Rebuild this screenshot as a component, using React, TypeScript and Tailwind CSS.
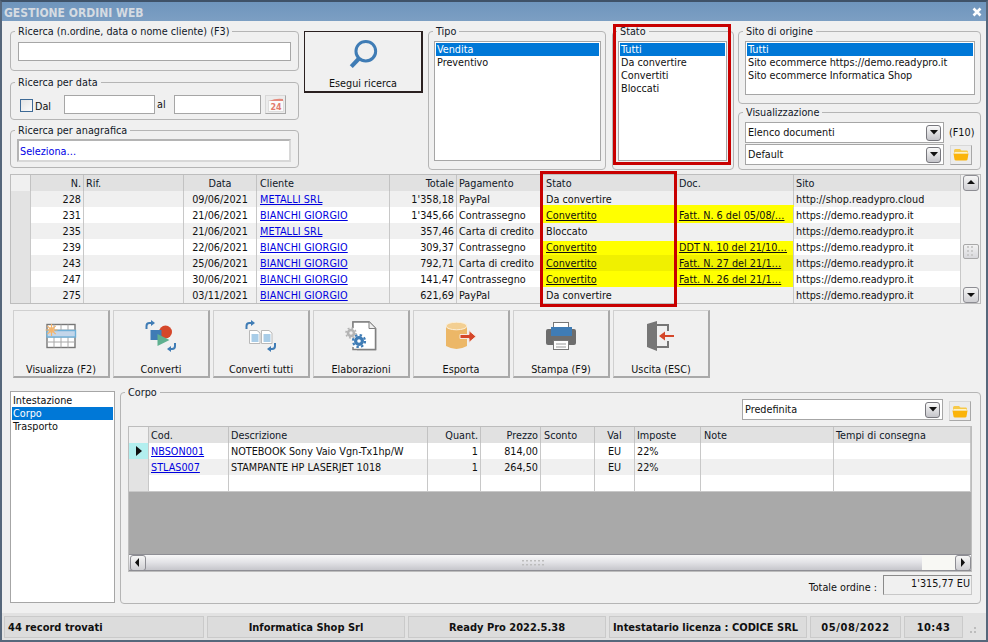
import React from "react";

const groupCls = "border border-[#b5b5b5] rounded-[4px] min-w-0";
const legendCls = "ml-[4px] px-[3px] pt-[1px] leading-[13px] text-[#101828]";

function Group({ label, className, children }: { label: string; className: string; children?: React.ReactNode }) {
  return (
    <fieldset className={`${groupCls} ${className}`}>
      <legend className={legendCls}>{label}</legend>
      {children}
    </fieldset>
  );
}

function ListBox({ items, className }: { items: string[]; className: string }) {
  return (
    <div className={`border border-[#a6a6a6] bg-white p-[1px] ${className}`}>
      {items.map((t, i) => (
        <div key={t} className={`h-[13px] leading-[13px] pl-[1px] whitespace-nowrap ${i === 0 ? "bg-[#0078d7] text-white" : "text-[#101010]"}`}>
          {t}
        </div>
      ))}
    </div>
  );
}

function Arrow({ dir }: { dir: "up" | "down" | "left" | "right" }) {
  const pts = { up: "1,6 9,6 5,2", down: "1,2 9,2 5,6", left: "6,0 6,9 2,4.5", right: "3,0 3,9 7,4.5" }[dir];
  return (
    <svg width="10" height="9" viewBox="0 0 10 9">
      <polygon points={pts} fill="#111" />
    </svg>
  );
}

function ScrollBtn({ dir, className }: { dir: "up" | "down" | "left" | "right"; className: string }) {
  return (
    <div className={`flex items-center justify-center border border-[#8d8d93] rounded-[3px] bg-gradient-to-b from-[#f6f6f6] to-[#cfcfd3] ${className}`}>
      <Arrow dir={dir} />
    </div>
  );
}

function Combo({ text, className }: { text: string; className: string }) {
  return (
    <div className={`flex items-center border border-[#a6a6a6] bg-white pl-[2px] pr-[2px] ${className}`}>
      <span className="flex-1 truncate">{text}</span>
      <div className="w-[15px] h-[16px] flex items-center justify-center border border-[#77777d] rounded-[3px] bg-gradient-to-b from-[#fafafa] to-[#c4c4c9]">
        <svg width="8" height="5" viewBox="0 0 8 5"><polygon points="0,0 8,0 4,4.5" fill="#111" /></svg>
      </div>
    </div>
  );
}

function Folder() {
  return (
    <svg width="16" height="13" viewBox="0 0 16 13">
      <path d="M1 2.5Q1 1 2.5 1H7L8.5 2.5H14Q15 2.5 15 4V5H1Z" fill="#f7c948" />
      <path d="M0.5 5.5H15.5L14.5 11.5Q14.3 12.5 13 12.5H3Q1.7 12.5 1.5 11.5Z" fill="#fbb40a" />
      <rect x="1.5" y="4" width="13" height="1.4" fill="#fff3c4" />
    </svg>
  );
}

function FolderBtn({ className }: { className: string }) {
  return (
    <div className={`w-[22px] h-[20px] flex items-center justify-center bg-[#ececec] border border-[#d8d8d8] border-r-[#a8a8a8] border-b-[#a8a8a8] ${className}`}>
      <Folder />
    </div>
  );
}

const Link = ({ children }: { children: React.ReactNode }) => <span className="text-[#0000e0] underline">{children}</span>;
const YL = ({ children }: { children: React.ReactNode }) => <span className="text-[#101010] underline">{children}</span>;

type Row = { n: string; d: string; c: string; t: string; p: string; s: string; doc: string; site: string; yl?: string };
const rows: Row[] = [
  { n: "228", d: "09/06/2021", c: "METALLI SRL", t: "1'358,18", p: "PayPal", s: "Da convertire", doc: "", site: "http://shop.readypro.cloud" },
  { n: "231", d: "21/06/2021", c: "BIANCHI GIORGIO", t: "1'345,66", p: "Contrassegno", s: "Convertito", doc: "Fatt. N. 6 del 05/08/…", site: "https://demo.readypro.it", yl: "bg-[#ffff00] shadow-[0_-2px_0_#ffff00]" },
  { n: "235", d: "21/06/2021", c: "METALLI SRL", t: "357,46", p: "Carta di credito", s: "Bloccato", doc: "", site: "https://demo.readypro.it" },
  { n: "239", d: "22/06/2021", c: "BIANCHI GIORGIO", t: "309,37", p: "Contrassegno", s: "Convertito", doc: "DDT N. 10 del 21/10…", site: "https://demo.readypro.it", yl: "bg-[#ffff00] shadow-[inset_0_2px_0_#f0f0f0]" },
  { n: "243", d: "25/06/2021", c: "BIANCHI GIORGIO", t: "792,71", p: "Carta di credito", s: "Convertito", doc: "Fatt. N. 27 del 21/1…", site: "https://demo.readypro.it", yl: "bg-[#f0f000]" },
  { n: "247", d: "30/06/2021", c: "BIANCHI GIORGIO", t: "141,47", p: "Contrassegno", s: "Convertito", doc: "Fatt. N. 26 del 21/1…", site: "https://demo.readypro.it", yl: "bg-[#ffff00]" },
  { n: "275", d: "03/11/2021", c: "BIANCHI GIORGIO", t: "621,69", p: "PayPal", s: "Da convertire", doc: "", site: "https://demo.readypro.it" },
];

const topCols = "grid grid-cols-[20px_53px_100px_73px_133px_67px_86px_134px_117px_167px]";
const hCell = "h-[16px] leading-[18px] px-[2px] bg-[#e1e1e1] border-r border-r-[#c2c2c2] truncate text-[#101828]";
const bCell = "h-[16px] leading-[18px] px-[2px] border-r border-r-[#c8c8c8] whitespace-nowrap overflow-hidden text-[#101010]";

const botCols = "grid grid-cols-[20px_80px_199px_53px_60px_54px_40px_66px_133px_137px]";

const Turn1 = () => (
  <>
    <path d="M1.5 9V6Q1.5 3 4.5 3H6" stroke="#3f7cb5" strokeWidth="2" fill="none" />
    <polygon points="6,0 10,3 6,6" fill="#3f7cb5" />
  </>
);
const Turn2 = () => (
  <>
    <path d="M30 23V26Q30 29 27 29H26" stroke="#3f7cb5" strokeWidth="2" fill="none" />
    <polygon points="26,26 22,29 26,32" fill="#3f7cb5" />
  </>
);
const Box = ({ children }: { children: React.ReactNode }) => (
  <svg width="32" height="32" viewBox="0 0 32 32">{children}</svg>
);

const IconTable = () => (
  <Box>
    <rect x="2" y="4.5" width="28" height="23" fill="#fff" stroke="#777" strokeWidth="1.4" />
    <path d="M2 10H30M2 17H30M2 22H30M9 4.5V27.5M16 4.5V27.5M23 4.5V27.5" stroke="#a8a8a8" fill="none" />
    <rect x="2" y="10.5" width="28.5" height="6.5" fill="#c3d6ea" stroke="#6fb0d8" strokeWidth="1.4" />
    <circle cx="6.5" cy="10" r="3" fill="#f6c488" />
    <path d="M6.5 4V16M0.5 10H12.5M2.3 5.8L10.7 14.2M10.7 5.8L2.3 14.2" stroke="#f3b36c" strokeWidth="1.2" />
  </Box>
);
const IconConv = () => (
  <Box>
    <Turn1 />
    <circle cx="20.5" cy="12" r="6.5" fill="#d5472a" />
    <rect x="5.5" y="10" width="11" height="10" fill="#3f7cb5" />
    <polygon points="12.5,14 12.5,26 24.5,20" fill="#5fb08f" />
    <Turn2 />
  </Box>
);
const IconConvAll = () => (
  <Box>
    <Turn1 />
    <path d="M4.5 10.5H12L15 13V23.5H4.5Z" fill="#fff" stroke="#b9b9b9" />
    <path d="M16.5 10.5H24L27 13V23.5H16.5Z" fill="#fff" stroke="#b9b9b9" />
    <rect x="6.5" y="14" width="7" height="8" fill="#a9cde8" />
    <rect x="18.5" y="14" width="7" height="8" fill="#a9cde8" />
    <Turn2 />
  </Box>
);
const IconElab = () => (
  <Box>
    <path d="M8 8V2H24L30.5 8.5V29.5H12" fill="#fff" stroke="#808080" strokeWidth="1.5" />
    <path d="M8 2H24V8.5H30.5V29.5H8Z" fill="#fff" />
    <path d="M8 8V2H24L30.5 8.5V29.5H8V27" fill="none" stroke="#808080" strokeWidth="1.5" />
    <path d="M24 2V8.5H30.5" fill="#f0f0f0" stroke="#808080" />
    <circle cx="6" cy="13" r="3" fill="none" stroke="#b4b4b4" strokeWidth="2.6" />
    <circle cx="6" cy="13" r="5" fill="none" stroke="#b4b4b4" strokeWidth="1.6" strokeDasharray="1.9 2" />
    <circle cx="14" cy="21" r="3.4" fill="none" stroke="#3f7cb5" strokeWidth="3.2" />
    <circle cx="14" cy="21" r="6" fill="none" stroke="#3f7cb5" strokeWidth="2.2" strokeDasharray="2.4 2.3" />
  </Box>
);
const IconExport = () => (
  <Box>
    <path d="M1 6V26Q11.5 32 22 26V6Z" fill="#ecb767" />
    <ellipse cx="11.5" cy="6" rx="10.5" ry="3.8" fill="#f3cf92" stroke="#fbf0dc" />
    <path d="M15 14.5H24V10.5L31 16.5L24 22.5V18.5H15Z" fill="#d5472a" stroke="#f5e8df" />
  </Box>
);
const IconPrint = () => (
  <Box>
    <rect x="8.5" y="2.5" width="15" height="8" fill="#fff" stroke="#777" />
    <path d="M3 9H29Q31 9 31 11V23Q31 25 29 25H3Q1 25 1 23V11Q1 9 3 9Z" fill="#6d6d6d" />
    <rect x="6" y="7" width="21" height="9" fill="#3f7cb5" />
    <rect x="8.5" y="20.5" width="15" height="9" fill="#fff" stroke="#777" />
    <path d="M11 24H21M11 27H21" stroke="#999" />
  </Box>
);
const IconExit = () => (
  <Box>
    <polygon points="2,4 12,1 12,31 2,27" fill="#767676" />
    <path d="M12 5H23V11M23 21V27H12" stroke="#767676" strokeWidth="2" fill="none" />
    <path d="M29 15H20V11.5L14 16L20 20.5V17H29Z" fill="#d5472a" />
  </Box>
);

const actions: [string, React.ReactNode][] = [
  ["Visualizza (F2)", <IconTable />],
  ["Converti", <IconConv />],
  ["Converti tutti", <IconConvAll />],
  ["Elaborazioni", <IconElab />],
  ["Esporta", <IconExport />],
  ["Stampa (F9)", <IconPrint />],
  ["Uscita (ESC)", <IconExit />],
];

function Grip({ vertical }: { vertical?: boolean }) {
  return (
    <svg width={vertical ? 10 : 24} height={vertical ? 12 : 6} viewBox={vertical ? "0 0 10 12" : "0 0 24 6"}>
      {vertical
        ? [0, 4, 8].flatMap((y) => [1, 5].map((x) => <rect key={`${x}-${y}`} x={x} y={y} width="2" height="2" fill="#c9c9c9" />))
        : [0, 4, 8, 12, 16, 20].flatMap((x) => [0, 4].map((y) => <rect key={`${x}-${y}`} x={x} y={y} width="2" height="1.5" fill="#bdbdbd" />))}
    </svg>
  );
}

const statusCls = "h-[22px] leading-[21px] bg-[#dcdcdc] border border-[#cacaca]";

export default function App() {
  return (
    <div className="relative w-[988px] h-[642px] overflow-hidden flex flex-col bg-[#f0f0f0] border-2 border-[#56677b] border-t-[#3f5268] text-[10.75px] leading-[13px] text-[#101010] [font-family:'DejaVu_Sans_Condensed','DejaVu_Sans',sans-serif]">
      {/* Title bar */}
      <div className="h-[19px] shrink-0 flex items-center justify-between pt-[3px] pl-[2px] pr-[3px] bg-gradient-to-b from-[#6f95bd] to-[#7c9fc3]">
        <span className="text-[12px] font-bold text-[#d5dbe2]">GESTIONE ORDINI WEB</span>
        <svg width="12" height="12" viewBox="0 0 12 12" className="-mt-[3px]"><path d="M2.5 2.5L9.5 9.5M9.5 2.5L2.5 9.5" stroke="#fff" strokeWidth="2.6" /></svg>
      </div>

      {/* Search area */}
      <div className="flex items-start mt-[3px] ml-[8px] h-[146px] shrink-0">
        <div className="w-[289px] flex flex-col">
          <Group label="Ricerca (n.ordine, data o nome cliente) (F3)" className="h-[47px]">
            <div className="ml-[7px] mt-[4px] w-[273px] h-[19px] bg-white border border-[#a6a6a6]" />
          </Group>
          <Group label="Ricerca per data" className="h-[45px] mt-[4px]">
            <div className="flex items-center mt-[6px] ml-[9px]">
              <div className="w-[13px] h-[13px] mt-[1px] border border-[#3e6a96] bg-gradient-to-br from-[#e4e4e4] to-[#fafafa]" />
              <span className="ml-[2px] w-[29px] pt-[4px]">Dal</span>
              <div className="w-[91px] h-[19px] bg-white border border-[#a6a6a6]" />
              <span className="ml-[2px] w-[17px]">al</span>
              <div className="w-[87px] h-[19px] bg-white border border-[#a6a6a6]" />
              <div className="ml-[4px] w-[21px] h-[19px] flex items-center justify-center bg-[#ececec] border border-[#d8d8d8] border-r-[#a8a8a8] border-b-[#a8a8a8]">
                <svg width="16" height="14" viewBox="0 0 16 14">
                  <rect x="0.5" y="2.5" width="15" height="11" fill="#fbfbfb" stroke="#dedede" />
                  <path d="M1 3Q8 0 15 1V3Z" fill="#e58a7c" />
                  <text x="8" y="12" textAnchor="middle" fontSize="8" fontWeight="bold" fill="#e27b6c" fontFamily="DejaVu Sans">24</text>
                </svg>
              </div>
            </div>
          </Group>
          <Group label="Ricerca per anagrafica" className="h-[45px] mt-[3px]">
            <div className="ml-[6px] mt-[2px] w-[274px] h-[23px] bg-white border-2 border-[#b4b4b4] border-r-[#d8d8d8] border-b-[#d8d8d8] pl-[1px] leading-[21px] text-[#0000e6]">Seleziona…</div>
          </Group>
        </div>

        <div className="ml-[5px] mt-[7px] w-[119px] h-[62px] flex flex-col items-center bg-[#f0f0f0] border border-[#2a2020] border-b-2 border-r-2">
          <svg width="30" height="31" viewBox="0 0 32 32" className="mt-[7px]">
            <circle cx="19" cy="12.5" r="10.5" fill="none" stroke="#3f7cb5" strokeWidth="3.2" />
            <path d="M11.5 20.5L3.5 29" stroke="#3f7cb5" strokeWidth="4.4" />
          </svg>
          <span className="mt-[7px]">Esegui ricerca</span>
        </div>

        <Group label="Tipo" className="ml-[5px] w-[178px] h-[146px]">
          <ListBox items={["Vendita", "Preventivo"]} className="ml-[5px] mt-[3px] w-[167px] h-[120px]" />
        </Group>
        <Group label="Stato" className="ml-[6px] w-[122px] h-[146px]">
          <ListBox items={["Tutti", "Da convertire", "Convertiti", "Bloccati"]} className="ml-[5px] mt-[3px] w-[109px] h-[120px]" />
        </Group>

        <div className="ml-[4px] w-[243px] flex flex-col">
          <Group label="Sito di origine" className="h-[80px]">
            <ListBox items={["Tutti", "Sito ecommerce https://demo.readypro.it", "Sito ecommerce Informatica Shop"]} className="ml-[6px] mt-[3px] w-[230px] h-[54px]" />
          </Group>
          <Group label="Visualizzazione" className="h-[65px] mt-[1px]">
            <div className="flex items-center ml-[6px] mt-[3px]">
              <Combo text="Elenco documenti" className="w-[199px] h-[21px]" />
              <span className="ml-[5px]">(F10)</span>
            </div>
            <div className="flex items-center ml-[6px] mt-[1px]">
              <Combo text="Default" className="w-[199px] h-[21px]" />
              <FolderBtn className="ml-[6px]" />
            </div>
          </Group>
        </div>
      </div>

      {/* Orders grid */}
      <div className="flex mt-[4px] ml-[8px] w-[971px] h-[130px] shrink-0 bg-[#f0f0f0] border border-[#bdbdbd]">
        <div className="w-[950px] flex flex-col">
          <div className={topCols}>
            <div className={`${hCell} bg-[#f0f0f0]`} />
            <div className={`${hCell} text-right`}>N.</div>
            <div className={hCell}>Rif.</div>
            <div className={`${hCell} text-center`}>Data</div>
            <div className={`${hCell} pl-[3px]`}>Cliente</div>
            <div className={`${hCell} text-right`}>Totale</div>
            <div className={hCell}>Pagamento</div>
            <div className={`${hCell} pl-[3px]`}>Stato</div>
            <div className={hCell}>Doc.</div>
            <div className={hCell}>Sito</div>
          </div>
          {rows.map((r, i) => {
            const bg = i % 2 === 0 ? "bg-[#f0f0f0]" : "bg-white";
            return (
              <div key={r.n} className={`${topCols} ${bg}`}>
                <div className={`${bCell} bg-[#e3e3e3]`} />
                <div className={`${bCell} text-right`}>{r.n}</div>
                <div className={bCell} />
                <div className={`${bCell} text-center`}>{r.d}</div>
                <div className={`${bCell} pl-[3px] tracking-[0.12px]`}><Link>{r.c}</Link></div>
                <div className={`${bCell} text-right`}>{r.t}</div>
                <div className={bCell}>{r.p}</div>
                <div className={`${bCell} pl-[3px] ${r.yl ?? ""}`}>{r.yl ? <YL>{r.s}</YL> : r.s}</div>
                <div className={`${bCell} ${r.yl ?? ""}`}>{r.doc && <YL>{r.doc}</YL>}</div>
                <div className={bCell}>{r.site}</div>
              </div>
            );
          })}
        </div>
        <div className="w-[20px] pl-[1px] flex flex-col items-center bg-[#f0f0f0]">
          <ScrollBtn dir="up" className="w-[16px] h-[16px]" />
          <div className="mt-[53px] w-[16px] h-[16px] flex items-center justify-center border border-[#a8a8a8] rounded-[2px] bg-gradient-to-b from-[#f2f2f2] to-[#d8d8dc]"><Grip vertical /></div>
          <ScrollBtn dir="down" className="mt-[28px] w-[16px] h-[16px]" />
        </div>
      </div>

      {/* Action buttons */}
      <div className="flex gap-[3px] mt-[6px] ml-[11px] h-[68px] shrink-0">
        {actions.map(([label, icon]) => (
          <div key={label} className="w-[97px] flex flex-col items-center bg-[#f0f0f0] border border-[#d0d0d0] border-r-2 border-b-2 border-r-[#a9a9a9] border-b-[#a9a9a9]">
            <div className="h-[41px] mt-[5px] flex items-center justify-center">{icon}</div>
            <span className="mt-[7px]">{label}</span>
          </div>
        ))}
      </div>

      {/* Detail area */}
      <div className="flex mt-[7px] ml-[8px] h-[219px] shrink-0">
        <div className="mt-[6px] w-[105px] h-[212px] border border-[#a6a6a6] bg-white p-[1px] pt-[2px]">
          <div className="h-[13px] leading-[13px] pl-[1px]">Intestazione</div>
          <div className="h-[13px] leading-[13px] pl-[1px] bg-[#0078d7] text-white">Corpo</div>
          <div className="h-[13px] leading-[13px] pl-[1px]">Trasporto</div>
        </div>
        <Group label="Corpo" className="ml-[5px] w-[861px] h-[219px]">
          <div className="flex items-start justify-end mr-[9px] h-[21px]">
            <Combo text="Predefinita" className="w-[201px] h-[21px]" />
            <FolderBtn className="ml-[6px] mt-[2px]" />
          </div>
          <div className="ml-[7px] mt-[6px] w-[844px] h-[146px] flex flex-col border border-[#bdbdbd] bg-[#a9a9a9]">
            <div className={botCols}>
              <div className={`${hCell} bg-[#f0f0f0]`} />
              <div className={hCell}>Cod.</div>
              <div className={hCell}>Descrizione</div>
              <div className={`${hCell} text-right`}>Quant.</div>
              <div className={`${hCell} text-right`}>Prezzo</div>
              <div className={`${hCell} pl-[3px]`}>Sconto</div>
              <div className={`${hCell} text-center`}>Val</div>
              <div className={hCell}>Imposte</div>
              <div className={`${hCell} pl-[3px]`}>Note</div>
              <div className={hCell}>Tempi di consegna</div>
            </div>
            <div className={`${botCols} bg-white`}>
              <div className={`${bCell} bg-[#b2efef] flex items-center justify-center`}>
                <svg width="6" height="10" viewBox="0 0 6 10"><polygon points="0,0 6,5 0,10" fill="#111" /></svg>
              </div>
              <div className={bCell}><Link>NBSON001</Link></div>
              <div className={bCell}>NOTEBOOK Sony Vaio Vgn-Tx1hp/W</div>
              <div className={`${bCell} text-right`}>1</div>
              <div className={`${bCell} text-right`}>814,00</div>
              <div className={bCell} />
              <div className={`${bCell} text-center`}>EU</div>
              <div className={bCell}>22%</div>
              <div className={bCell} />
              <div className={bCell} />
            </div>
            <div className={`${botCols} bg-[#f0f0f0]`}>
              <div className={`${bCell} bg-[#e3e3e3]`} />
              <div className={bCell}><Link>STLAS007</Link></div>
              <div className={bCell}>STAMPANTE HP LASERJET 1018</div>
              <div className={`${bCell} text-right`}>1</div>
              <div className={`${bCell} text-right`}>264,50</div>
              <div className={bCell} />
              <div className={`${bCell} text-center`}>EU</div>
              <div className={bCell}>22%</div>
              <div className={bCell} />
              <div className={bCell} />
            </div>
            <div className={`${botCols} bg-white border-b border-b-[#c8c8c8]`}>
              <div className={`${bCell} bg-[#e3e3e3]`} />
              {Array.from({ length: 9 }).map((_, i) => <div key={i} className={bCell} />)}
            </div>
            <div className="flex-1" />
            <div className="h-[17px] flex items-center bg-gradient-to-b from-[#f8f8f8] via-[#e2e2e6] to-[#c6c6cb] border-t border-b border-[#8e8e94]">
              <ScrollBtn dir="left" className="w-[16px] h-[16px] ml-[1px]" />
              <div className="flex-1 flex justify-center"><Grip /></div>
              <div className="w-[33px] h-[15px] bg-[#f8f8f4]" />
              <ScrollBtn dir="right" className="w-[16px] h-[16px]" />
            </div>
          </div>
          <div className="flex items-start justify-end mr-[8px] mt-[3px]">
            <span className="mt-[6px] mr-[6px]">Totale ordine :</span>
            <div className="w-[89px] h-[20px] border border-[#c8c8c8] border-l-[#8a8a8a] border-t-[#8a8a8a] text-right leading-[13px] pt-[1px] pr-[1px]">1'315,77 EU</div>
          </div>
        </Group>
      </div>

      {/* Status bar */}
      <div className="flex-1 mt-[9px] flex items-center pl-[2px] gap-[3px] bg-[#e2e2e2] font-bold text-[11px]">
        <div className={`w-[200px] pl-[3px] ${statusCls}`}>44 record trovati</div>
        <div className={`w-[198px] text-center ${statusCls}`}>Informatica Shop Srl</div>
        <div className={`w-[198px] text-center ${statusCls}`}>Ready Pro 2022.5.38</div>
        <div className={`w-[198px] text-center pr-[5px] ${statusCls}`}>Intestatario licenza : CODICE SRL</div>
        <div className={`w-[91px] text-center tracking-[0.6px] ${statusCls}`}>05/08/2022</div>
        <div className={`w-[59px] text-center tracking-[0.4px] ${statusCls}`}>10:43</div>
        <svg width="8" height="8" viewBox="0 0 8 8" className="ml-[3px] mt-[8px]">
          <rect x="5" y="0" width="2" height="2" fill="#bdbdbd" />
          <rect x="1" y="4" width="2" height="2" fill="#bdbdbd" />
          <rect x="5" y="4" width="2" height="2" fill="#bdbdbd" />
        </svg>
      </div>

      {/* Red highlight frames drawn over the page */}
      <div className="absolute left-[611px] top-[22px] w-[118px] h-[141px] border-[3px] border-[#c80000] pointer-events-none" />
      <div className="absolute left-[538px] top-[169px] w-[137px] h-[136px] border-[3px] border-[#c80000] pointer-events-none" />
    </div>
  );
}
